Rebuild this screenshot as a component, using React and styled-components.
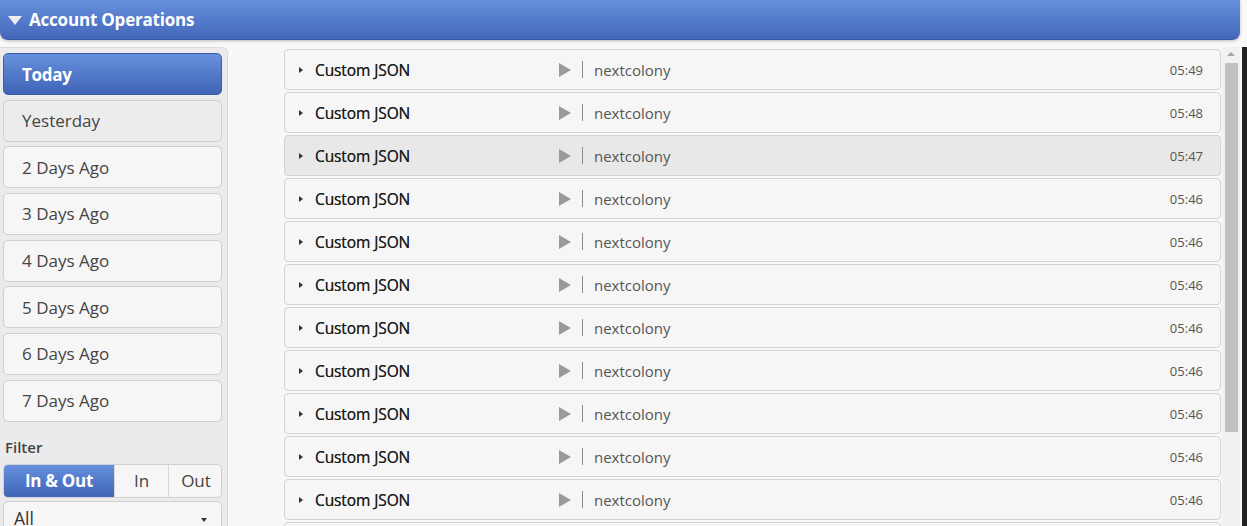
import React from "react";
import styled, { createGlobalStyle } from "styled-components";

const Global = createGlobalStyle`
  html, body { margin: 0; padding: 0; }
  body {
    background: #f8f8f8;
    font-family: "Open Sans", "Liberation Sans", sans-serif;
    color: #333;
    overflow: hidden;
  }
  * { box-sizing: border-box; }
`;

const Page = styled.div`
  width: 1247px;
  height: 526px;
  display: flex;
  flex-direction: column;
  gap: 7px;
  overflow: hidden;
`;

const Header = styled.div`
  height: 40px;
  width: 1240px;
  flex: none;
  display: flex;
  align-items: center;
  gap: 7px;
  padding-left: 8px;
  background: linear-gradient(#6690dc, #4467bb);
  border-bottom: 1px solid #3655a3;
  border-radius: 0 0 8px 8px;
  box-shadow: 0 1px 3px rgba(0, 0, 0, 0.25);
  color: #fff;
  font-size: 17px;
  font-weight: 700;
  letter-spacing: -0.2px;
`;

const Body = styled.div`
  flex: 1;
  display: flex;
  min-height: 0;
`;

const Sidebar = styled.aside`
  width: 228px;
  flex: none;
  background: #ebebeb;
  border: 1px solid #dadada;
  border-left: none;
  border-bottom: none;
  border-radius: 0 6px 0 0;
  padding: 5px 5px 0 3px;
  display: flex;
  flex-direction: column;
  & > * { flex: none; }
`;

const DayList = styled.div`
  display: flex;
  flex-direction: column;
  gap: 4.67px;
`;

const DayButton = styled.div`
  height: 42px;
  display: flex;
  align-items: center;
  padding-left: 18px;
  border-radius: 5px;
  font-size: 17px;
  border: 1px solid ${(p) => (p.$active ? "#3a5cab" : "#cfcfcf")};
  background: ${(p) =>
    p.$active
      ? "linear-gradient(#6690dc, #4064b7)"
      : p.$hover
      ? "#ececec"
      : "#f6f6f6"};
  color: ${(p) => (p.$active ? "#fff" : "#444")};
  font-weight: ${(p) => (p.$active ? 700 : 400)};
  letter-spacing: ${(p) => (p.$active ? "-0.3px" : "0")};
`;

const FilterLabel = styled.div`
  margin: 15px 0 7px 2px;
  font-size: 15px;
  font-weight: 600;
  color: #444;
`;

const Segmented = styled.div`
  display: flex;
  height: 34px;
  border: 1px solid #d0d0d0;
  border-radius: 5px;
  background: #f6f6f6;
  overflow: hidden;
`;

const Segment = styled.div`
  width: ${(p) => p.$w}px;
  flex: none;
  display: flex;
  align-items: center;
  justify-content: center;
  font-size: 17px;
  border-left: ${(p) => (p.$first ? "none" : "1px solid #d6d6d6")};
  background: ${(p) =>
    p.$active ? "linear-gradient(#6690dc, #4064b7)" : "transparent"};
  color: ${(p) => (p.$active ? "#fff" : "#444")};
  font-weight: ${(p) => (p.$active ? 700 : 400)};
  letter-spacing: ${(p) => (p.$active ? "-0.3px" : "0")};
`;

const Select = styled.div`
  margin-top: 3px;
  height: 34px;
  border: 1px solid #d0d0d0;
  border-radius: 5px;
  background: #f6f6f6;
  display: flex;
  align-items: center;
  justify-content: space-between;
  padding: 0 14px 0 10px;
  font-size: 17.5px;
  color: #333;
`;

const SelectArrow = styled.span`
  width: 0;
  height: 0;
  border-left: 3px solid transparent;
  border-right: 3px solid transparent;
  border-top: 4px solid #333;
  margin-top: 4px;
`;

const Main = styled.main`
  flex: 1;
  display: flex;
  padding-left: 56px;
  min-width: 0;
`;

const List = styled.div`
  width: 937px;
  flex: none;
  display: flex;
  flex-direction: column;
  gap: 2px;
  padding-top: 2px;
`;

const Row = styled.div`
  height: 41px;
  flex: none;
  display: flex;
  align-items: center;
  padding: 0 17px 0 14px;
  border: 1px solid #d3d3d3;
  border-radius: 4px;
  background: ${(p) => (p.$hover ? "#e8e8e8" : "#f6f6f6")};
`;

const Caret = styled.span`
  width: 0;
  height: 0;
  border-top: 3.5px solid transparent;
  border-bottom: 3.5px solid transparent;
  border-left: 4px solid #333;
  margin-right: 12px;
`;

const OpName = styled.span`
  width: 244px;
  flex: none;
  font-size: 15.5px;
  font-weight: 400;
  color: #1e1e1e;
  letter-spacing: -0.1px;
  text-shadow: 0 0 0.4px #333;
`;

const Play = styled.span`
  width: 0;
  height: 0;
  border-top: 7px solid transparent;
  border-bottom: 7px solid transparent;
  border-left: 12px solid #9a9a9a;
  margin-right: 11px;
`;

const Sep = styled.span`
  width: 1px;
  height: 17px;
  background: #8c8c8c;
  margin-right: 11px;
`;

const Account = styled.span`
  flex: 1;
  font-size: 15px;
  color: #555;
`;

const Time = styled.span`
  font-size: 13px;
  color: #555;
`;

const Scrollbar = styled.div`
  width: 18px;
  flex: none;
  margin-left: 1px;
  background: #f1f1f1;
  display: flex;
  flex-direction: column;
  align-items: center;
  padding-top: 5px;
`;

const ScrollUp = styled.span`
  width: 0;
  height: 0;
  border-left: 4px solid transparent;
  border-right: 4px solid transparent;
  border-bottom: 4px solid #a3a3a3;
  margin-bottom: 7px;
`;

const Thumb = styled.div`
  width: 13px;
  height: 369px;
  background: #c1c1c1;
`;

const Edge = styled.div`
  width: 5px;
  flex: none;
  margin-left: 2px;
  background: #222;
`;

const HeaderTri = styled.span`
  width: 0;
  height: 0;
  border-left: 7.5px solid transparent;
  border-right: 7.5px solid transparent;
  border-top: 9px solid #eee;
  margin-top: 2px;
`;

const days = [
  "Today",
  "Yesterday",
  "2 Days Ago",
  "3 Days Ago",
  "4 Days Ago",
  "5 Days Ago",
  "6 Days Ago",
  "7 Days Ago",
];

const times = [
  "05:49",
  "05:48",
  "05:47",
  "05:46",
  "05:46",
  "05:46",
  "05:46",
  "05:46",
  "05:46",
  "05:46",
  "05:46",
  "05:46",
];

export default function App() {
  return (
    <>
      <Global />
      <Page>
        <Header>
          <HeaderTri />
          Account Operations
        </Header>
        <Body>
          <Sidebar>
            <DayList>
              {days.map((d, i) => (
                <DayButton key={d} $active={i === 0} $hover={i === 1}>
                  {d}
                </DayButton>
              ))}
            </DayList>
            <FilterLabel>Filter</FilterLabel>
            <Segmented>
              <Segment $first $active $w={110}>
                In &amp; Out
              </Segment>
              <Segment $w={54}>In</Segment>
              <Segment $w={55}>Out</Segment>
            </Segmented>
            <Select>
              All
              <SelectArrow />
            </Select>
          </Sidebar>
          <Main>
            <List>
              {times.map((t, i) => (
                <Row key={i} $hover={i === 2}>
                  <Caret />
                  <OpName>Custom JSON</OpName>
                  <Play />
                  <Sep />
                  <Account>nextcolony</Account>
                  <Time>{t}</Time>
                </Row>
              ))}
            </List>
            <Scrollbar>
              <ScrollUp />
              <Thumb />
            </Scrollbar>
            <Edge />
          </Main>
        </Body>
      </Page>
    </>
  );
}
